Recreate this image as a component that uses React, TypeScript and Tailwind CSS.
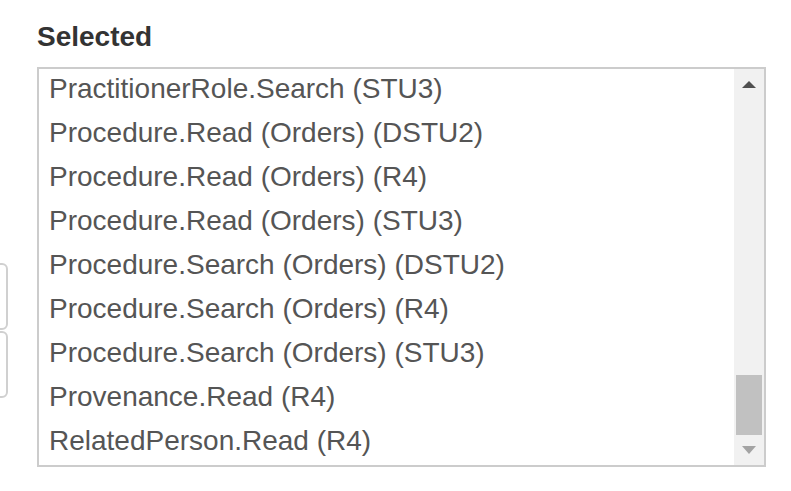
import React from 'react';

const items = [
  'PractitionerRole.Search (STU3)',
  'Procedure.Read (Orders) (DSTU2)',
  'Procedure.Read (Orders) (R4)',
  'Procedure.Read (Orders) (STU3)',
  'Procedure.Search (Orders) (DSTU2)',
  'Procedure.Search (Orders) (R4)',
  'Procedure.Search (Orders) (STU3)',
  'Provenance.Read (R4)',
  'RelatedPerson.Read (R4)',
];

const App: React.FC = () => {
  return (
    <div
      className="flex w-[791px] h-[491px] bg-white overflow-hidden"
      style={{ fontFamily: '"Liberation Sans", Arial, sans-serif' }}
    >
      {/* move buttons, mostly cut off at the left edge */}
      <div className="w-[8px] mt-[263px] overflow-hidden shrink-0">
        <div className="w-[60px] h-[67px] -ml-[52px] border-2 border-[#d0d0d0] rounded-md bg-white" />
        <div className="w-[60px] h-[67px] -ml-[52px] mt-[1px] border-2 border-[#d0d0d0] rounded-md bg-white" />
      </div>

      <div className="ml-[29px] pt-[17px]">
        <div className="h-[40px] leading-[40px] text-[28px] font-bold text-[#333]">Selected</div>
        <div className="mt-[10px] w-[729px] h-[400px] border-2 border-[#cccccc] flex">
          <div className="flex-1 overflow-hidden">
            <div className="-mt-[2px] pl-[10px]">
              {items.map((item) => (
                <div key={item} className="h-[44px] leading-[44px] text-[28px] text-[#555] whitespace-nowrap">
                  {item}
                </div>
              ))}
            </div>
          </div>

          <div className="w-[30px] bg-[#f1f1f1] flex flex-col">
            <div className="h-[30px] flex items-center justify-center">
              <svg width="14" height="7" viewBox="0 0 14 7">
                <polygon points="7,0 14,7 0,7" fill="#505050" />
              </svg>
            </div>
            <div className="flex-1 flex flex-col">
              <div className="mt-auto mx-[2px] h-[60px] bg-[#c1c1c1]" />
            </div>
            <div className="h-[30px] flex items-center justify-center">
              <svg width="14" height="8" viewBox="0 0 14 8">
                <polygon points="0,0 14,0 7,8" fill="#a3a3a3" />
              </svg>
            </div>
          </div>
        </div>
      </div>
    </div>
  );
};

export default App;
